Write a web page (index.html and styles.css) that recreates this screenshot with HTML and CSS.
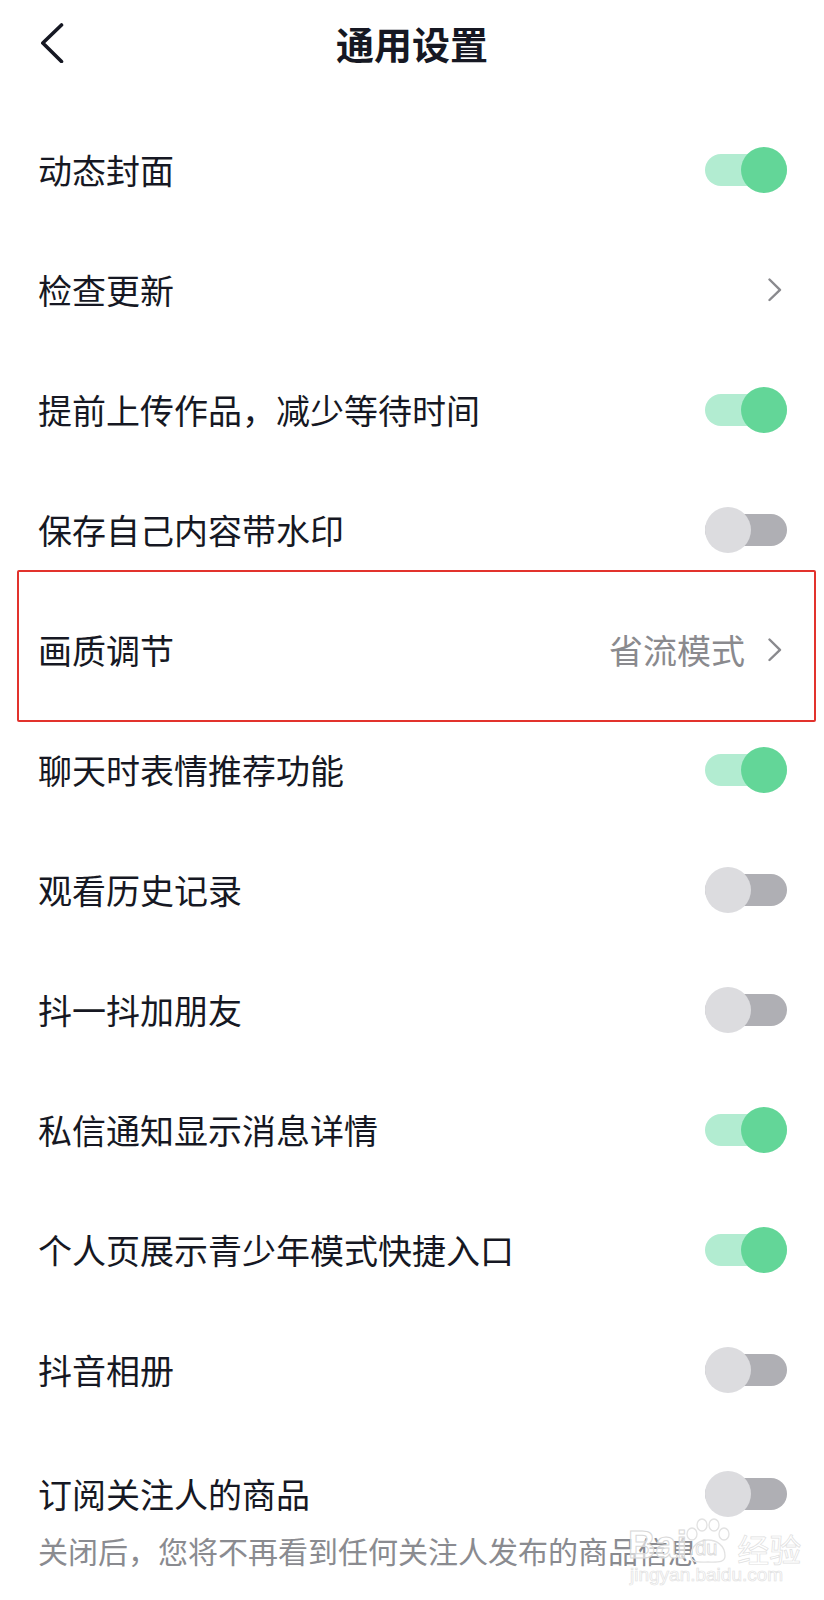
FILE: index.html
```html
<!DOCTYPE html>
<html lang="zh-CN">
<head>
    <meta charset="UTF-8">
    <meta name="viewport" content="width=device-width, initial-scale=1.0">
    <title>通用设置</title>
    <link rel="stylesheet" href="styles.css">
</head>
<body>

    <div class="header">
        <div class="back">
            <svg width="24" height="40" viewBox="0 0 24 40">
                <polyline points="21.5,2 2.8,20 21.5,38.5" fill="none" stroke="#161823" stroke-width="3.6" stroke-linecap="round" stroke-linejoin="round"/>
            </svg>
        </div>
        <h1>通用设置</h1>
        <div class="spacer"></div>
    </div>

    <div class="list">
        <div class="row">
            <span class="label">动态封面</span>
            <span class="switch on"><span class="knob"></span></span>
        </div>
        <div class="row">
            <span class="label">检查更新</span>
            <span class="arrow">
                <svg width="16" height="24" viewBox="0 0 16 24"><polyline points="2.5,1.5 13,11.8 2.5,22" fill="none" stroke="#8a8a8e" stroke-width="2.4" stroke-linecap="round" stroke-linejoin="round"/></svg>
            </span>
        </div>
        <div class="row">
            <span class="label">提前上传作品，减少等待时间</span>
            <span class="switch on"><span class="knob"></span></span>
        </div>
        <div class="row">
            <span class="label">保存自己内容带水印</span>
            <span class="switch off"><span class="knob"></span></span>
        </div>
        <div class="row marked">
            <span class="label">画质调节</span>
            <span class="value">省流模式
                <span class="arrow">
                    <svg width="16" height="24" viewBox="0 0 16 24"><polyline points="2.5,1.5 13,11.8 2.5,22" fill="none" stroke="#8a8a8e" stroke-width="2.4" stroke-linecap="round" stroke-linejoin="round"/></svg>
                </span>
            </span>
        </div>
        <div class="row">
            <span class="label">聊天时表情推荐功能</span>
            <span class="switch on"><span class="knob"></span></span>
        </div>
        <div class="row">
            <span class="label">观看历史记录</span>
            <span class="switch off"><span class="knob"></span></span>
        </div>
        <div class="row">
            <span class="label">抖一抖加朋友</span>
            <span class="switch off"><span class="knob"></span></span>
        </div>
        <div class="row">
            <span class="label">私信通知显示消息详情</span>
            <span class="switch on"><span class="knob"></span></span>
        </div>
        <div class="row">
            <span class="label">个人页展示青少年模式快捷入口</span>
            <span class="switch on"><span class="knob"></span></span>
        </div>
        <div class="row">
            <span class="label">抖音相册</span>
            <span class="switch off"><span class="knob"></span></span>
        </div>
        <div class="item">
            <div class="item-top">
                <span class="label">订阅关注人的商品</span>
                <span class="switch off"><span class="knob"></span></span>
            </div>
            <p class="desc">关闭后，您将不再看到任何关注人发布的商品信息</p>
        </div>
    </div>

    <div class="watermark">
        <div class="wm-line">
            <span class="wm-bai">Bai</span>
            <span class="wm-paw">
                <svg width="50" height="46" viewBox="0 0 50 46">
                    <g fill="none" stroke="#e2e2e2" stroke-width="1.3">
                        <ellipse cx="9" cy="16" rx="5" ry="6"/>
                        <ellipse cx="19" cy="7" rx="5" ry="6"/>
                        <ellipse cx="31" cy="7" rx="5" ry="6"/>
                        <ellipse cx="41" cy="16" rx="5" ry="6"/>
                        <path d="M8 38 C8 27 17 22 25 22 C33 22 42 27 42 38 C42 45 34 44 25 44 C16 44 8 45 8 38 Z"/>
                    </g>
                </svg>
                <span class="wm-du">du</span>
            </span>
            <span class="wm-jy">经验</span>
        </div>
        <div class="wm-url">jingyan.baidu.com</div>
    </div>

</body>
</html>
```

FILE: styles.css
```css
/* Reset */
* {
    margin: 0;
    padding: 0;
    box-sizing: border-box;
}

body {
    background: #fff;
    font-family: "Noto Sans CJK SC", "Noto Sans", sans-serif;
    color: #161823;
    width: 824px;
    height: 1600px;
    overflow: hidden;
    position: relative;
}

.header {
    height: 86px;
    display: grid;
    grid-template-columns: 100px 1fr 100px;
    align-items: center;
}

.back {
    padding-left: 40px;
    display: flex;
    align-items: center;
}

.header h1 {
    text-align: center;
    font-size: 38px;
    font-weight: bold;
    line-height: 1;
}

.list {
    padding-top: 24px;
}

.row {
    height: 120px;
    padding: 0 37px 0 38px;
    display: flex;
    align-items: center;
    justify-content: space-between;
}

.label {
    font-size: 34px;
    line-height: 1;
    color: #161823;
}

.value {
    font-size: 34px;
    line-height: 1;
    color: #8a8a8e;
    display: flex;
    align-items: center;
    gap: 22px;
}

.arrow {
    display: flex;
    align-items: center;
    margin-right: 4px;
}

/* red annotation box */
.marked {
    position: relative;
}

.marked::after {
    content: "";
    position: absolute;
    top: -20px;
    bottom: -12px;
    left: 17px;
    right: 8px;
    border: 2px solid #e2322d;
    border-radius: 2px;
}

/* switches */
.switch {
    width: 82px;
    height: 32px;
    border-radius: 16px;
    display: flex;
    align-items: center;
}

.knob {
    width: 46px;
    height: 46px;
    border-radius: 50%;
    flex-shrink: 0;
}

.switch.on {
    background: #b2ecd1;
    justify-content: flex-end;
}

.switch.on .knob {
    background: #63d698;
}

.switch.off {
    background: #afafb4;
    justify-content: flex-start;
}

.switch.off .knob {
    background: #dcdcdf;
}

.item {
    padding: 30px 37px 0 38px;
}

.item-top {
    height: 68px;
    display: flex;
    align-items: center;
    justify-content: space-between;
}

.desc {
    font-size: 30px;
    line-height: 44px;
    color: #8a8b90;
}

/* watermark */
.watermark {
    position: absolute;
    left: 628px;
    top: 1510px;
    color: transparent;
    font-family: "Liberation Sans", Arial, sans-serif;
}

.wm-line {
    display: flex;
    align-items: flex-end;
    height: 54px;
}

.wm-bai {
    font-size: 38px;
    font-weight: bold;
    line-height: 1;
    color: rgba(255, 255, 255, 0.6);
    -webkit-text-stroke: 1px #d8d8d8;
}

.wm-paw {
    position: relative;
    width: 50px;
    height: 46px;
    margin-left: -4px;
}

.wm-du {
    position: absolute;
    left: 12px;
    top: 20px;
    font-size: 20px;
    line-height: 1;
    -webkit-text-stroke: 0.8px #dadada;
}

.wm-jy {
    font-family: "Noto Sans CJK SC", sans-serif;
    font-size: 32px;
    line-height: 1;
    margin-left: 4px;
    -webkit-text-stroke: 0.7px #e0e0e0;
}

.wm-url {
    font-size: 19px;
    line-height: 22px;
    margin-left: 2px;
    -webkit-text-stroke: 0.7px #e2e2e2;
}
```
